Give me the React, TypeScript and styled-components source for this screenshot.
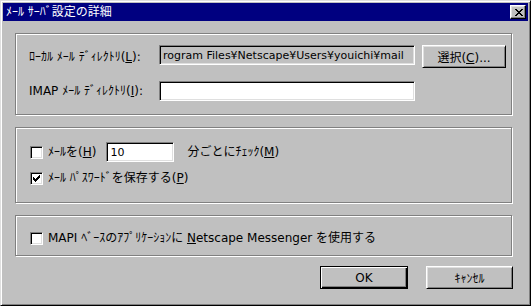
import styled, { createGlobalStyle } from 'styled-components'

const FONT = `"DejaVu Sans", "Noto Sans CJK JP", sans-serif`

const GlobalStyle = createGlobalStyle`
  html, body {
    margin: 0;
    padding: 0;
    background: #c0c0c0;
  }
  body {
    font-family: ${FONT};
    font-size: 12px;
    color: #000;
  }
`

export default function App() {
  return (
    <>
      <GlobalStyle />
      <Window>
        <TitleBar>
          <Title>ﾒｰﾙ ｻｰﾊﾞ設定の詳細</Title>
          <CloseButton aria-label="閉じる">
            <CloseGlyph />
          </CloseButton>
        </TitleBar>

        <Body>
          <Group $height={82}>
            <DirGrid>
              <Label>
                ﾛｰｶﾙ ﾒｰﾙ ﾃﾞｨﾚｸﾄﾘ(<u>L</u>):
              </Label>
              <TextField $width={256} $disabled readOnly value="rogram Files¥Netscape¥Users¥youichi¥mail" />
              <Button $width={84}>
                選択(<u>C</u>)...
              </Button>
              <Label>
                IMAP ﾒｰﾙ ﾃﾞｨﾚｸﾄﾘ(<u>I</u>):
              </Label>
              <TextField $width={256} readOnly value="" />
            </DirGrid>
          </Group>

          <Group $height={76}>
            <CheckList $top={14}>
              <CheckRow>
                <Checkbox />
                <Label>
                  ﾒｰﾙを(<u>H</u>)
                </Label>
                <TextField $width={68} $gap={8} readOnly value="10" />
                <Label>
                  分ごとにﾁｪｯｸ(<u>M</u>)
                </Label>
              </CheckRow>
              <CheckRow>
                <Checkbox checked />
                <Label>
                  ﾒｰﾙ ﾊﾟｽﾜｰﾄﾞを保存する(<u>P</u>)
                </Label>
              </CheckRow>
            </CheckList>
          </Group>

          <Group $height={41}>
            <CheckList $top={15}>
              <CheckRow>
                <Checkbox />
                <Label>
                  MAPI ﾍﾞｰｽのｱﾌﾟﾘｹｰｼｮﾝに <u>N</u>etscape Messenger を使用する
                </Label>
              </CheckRow>
            </CheckList>
          </Group>

          <Footer>
            <Button $width={88} $default>
              OK
            </Button>
            <Button $width={87}>ｷｬﾝｾﾙ</Button>
          </Footer>
        </Body>
      </Window>
    </>
  )
}

function CloseGlyph() {
  const rows = ['XX....XX', '.XX..XX.', '..XXXX..', '...XX...', '..XXXX..', '.XX..XX.', 'XX....XX']
  return (
    <svg width="8" height="7" viewBox="0 0 8 7" shapeRendering="crispEdges">
      {rows.flatMap((row, y) =>
        row.split('').map((c, x) => (c === 'X' ? <rect key={`${x}-${y}`} x={x} y={y} width="1" height="1" fill="#000" /> : null))
      )}
    </svg>
  )
}

function Checkbox({ checked }: { checked?: boolean }) {
  const rows = ['......X', '.....XX', 'X...XXX', 'XX.XXX.', 'XXXXX..', '.XXX...', '..X....']
  return (
    <CheckBoxFrame>
      {checked && (
        <svg width="7" height="7" viewBox="0 0 7 7" shapeRendering="crispEdges">
          {rows.flatMap((row, y) =>
            row.split('').map((c, x) => (c === 'X' ? <rect key={`${x}-${y}`} x={x} y={y} width="1" height="1" fill="#000" /> : null))
          )}
        </svg>
      )}
    </CheckBoxFrame>
  )
}

const Window = styled.div`
  box-sizing: border-box;
  width: 531px;
  height: 306px;
  display: flex;
  flex-direction: column;
  padding: 2px;
  background: #c0c0c0;
  border: 1px solid;
  border-color: #dfdfdf #000 #000 #dfdfdf;
  box-shadow: inset 1px 1px 0 #fff, inset -1px -1px 0 #808080;
`

const TitleBar = styled.div`
  height: 18px;
  display: flex;
  align-items: center;
  justify-content: space-between;
  padding: 0 2px 0 3px;
  background: #000080;
`

const Title = styled.span`
  color: #fff;
  font-size: 12px;
  line-height: 14px;
  white-space: pre;
`

const CloseButton = styled.button`
  box-sizing: border-box;
  width: 16px;
  height: 14px;
  padding: 0 0 0 1px;
  display: flex;
  align-items: center;
  justify-content: center;
  background: #c0c0c0;
  border: 1px solid;
  border-color: #fff #000 #000 #fff;
  box-shadow: inset -1px -1px 0 #808080, inset 1px 1px 0 #dfdfdf;
`

const Body = styled.div`
  flex: 1;
  display: flex;
  flex-direction: column;
  gap: 12px;
  padding: 12px 15px 0 12px;
`

const Group = styled.section<{ $height: number }>`
  box-sizing: border-box;
  height: ${p => p.$height}px;
  border: 1px solid #808080;
  box-shadow: inset 1px 1px 0 #fff, 1px 1px 0 #fff;
  margin-right: 1px;
`

const DirGrid = styled.div`
  display: grid;
  grid-template-columns: 123px 256px 84px;
  grid-template-rows: 23px 20px;
  column-gap: 7px;
  row-gap: 13px;
  align-items: start;
  padding: 11px 0 0 13px;

  & > span {
    align-self: center;
  }
`

const Label = styled.span`
  font-size: 12px;
  line-height: 14px;
  white-space: pre;

  u {
    text-decoration: underline;
    text-underline-offset: 1px;
  }
`

const TextField = styled.input<{ $width: number; $disabled?: boolean; $gap?: number }>`
  box-sizing: border-box;
  width: ${p => p.$width}px;
  height: 20px;
  margin: 0 ${p => p.$gap ?? 0}px 0 0;
  padding: 0 3px;
  font-family: ${FONT};
  font-size: 11px;
  color: #000;
  background: ${p => (p.$disabled ? '#c0c0c0' : '#fff')};
  border: 1px solid;
  border-color: #808080 #fff #fff #808080;
  box-shadow: inset 1px 1px 0 #000, inset -1px -1px 0 #dfdfdf;
  outline: none;
`

const Button = styled.button<{ $width: number; $default?: boolean }>`
  box-sizing: border-box;
  width: ${p => p.$width}px;
  height: 23px;
  padding: 0;
  font-family: ${FONT};
  font-size: 12px;
  color: #000;
  background: #c0c0c0;
  border: 1px solid;
  border-color: ${p => (p.$default ? '#000' : '#fff #000 #000 #fff')};
  box-shadow: ${p =>
    p.$default
      ? 'inset 1px 1px 0 #fff, inset -1px -1px 0 #000, inset -2px -2px 0 #808080'
      : 'inset 1px 1px 0 #dfdfdf, inset -1px -1px 0 #808080'};

  u {
    text-underline-offset: 1px;
  }
`

const CheckList = styled.div<{ $top: number }>`
  display: flex;
  flex-direction: column;
  gap: 9px;
  padding: ${p => p.$top}px 0 0 14px;
`

const CheckRow = styled.div`
  display: flex;
  align-items: center;
  gap: 5px;
  min-height: 13px;

  & > input {
    margin-left: 5px;
  }
`

const CheckBoxFrame = styled.span`
  box-sizing: border-box;
  width: 13px;
  height: 13px;
  flex: none;
  display: flex;
  align-items: center;
  justify-content: center;
  background: #fff;
  border: 1px solid;
  border-color: #808080 #fff #fff #808080;
  box-shadow: inset 1px 1px 0 #000, inset -1px -1px 0 #dfdfdf;
`

const Footer = styled.div`
  display: flex;
  justify-content: flex-end;
  gap: 18px;
  margin-top: -2px;
`
